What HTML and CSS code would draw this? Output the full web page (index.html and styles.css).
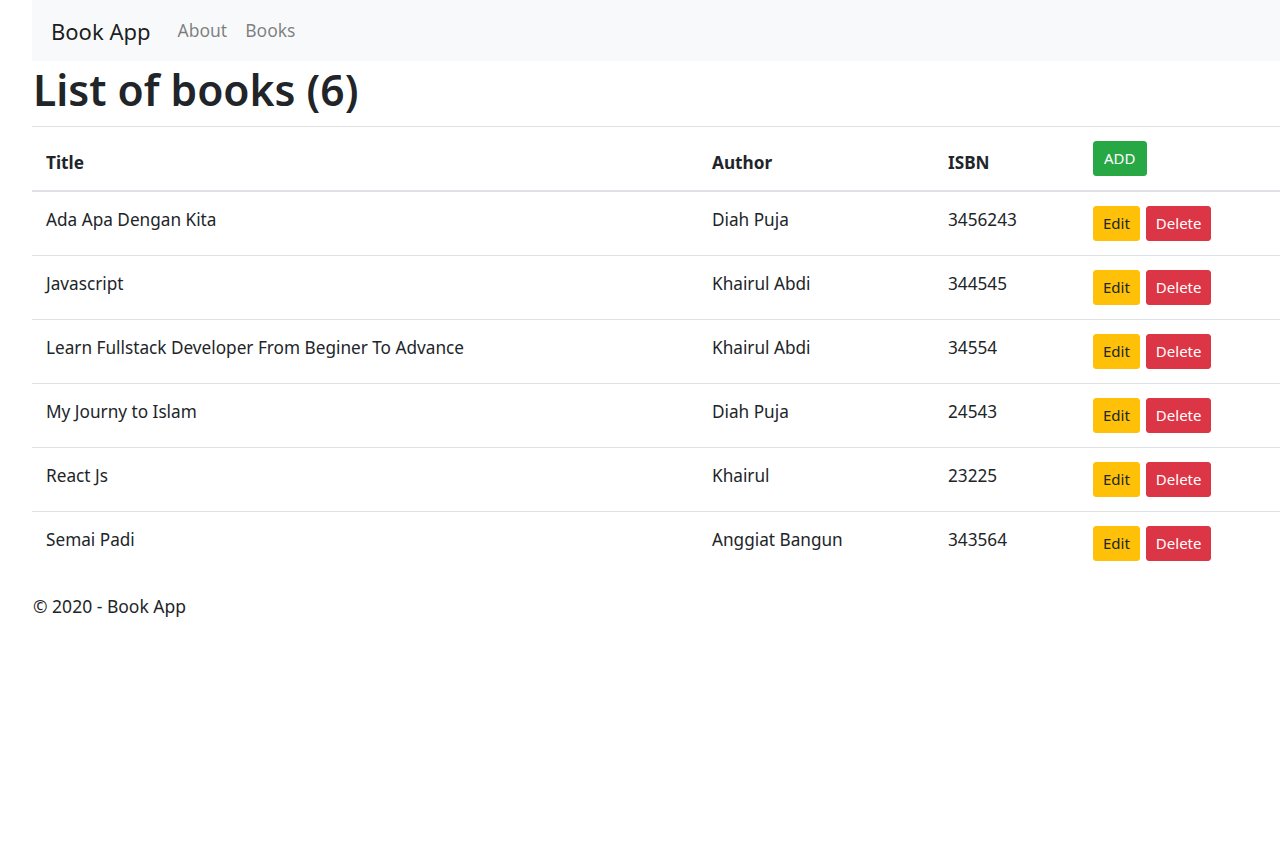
FILE: index.html
```html
<!DOCTYPE html>
<html lang="en">
<head>
<meta charset="utf-8">
<title>Book App</title>
<link rel="stylesheet" href="styles.css">
</head>
<body>
<div class="page">
  <nav class="navbar">
    <a class="brand" href="#">Book App</a>
    <a class="nav-link" href="#">About</a>
    <a class="nav-link" href="#">Books</a>
  </nav>
  <main>
    <h1 class="title">List of books (6)</h1>
    <table class="table">
      <colgroup>
        <col class="c-title"><col class="c-author"><col class="c-isbn"><col class="c-act">
      </colgroup>
      <thead>
        <tr><th>Title</th><th>Author</th><th>ISBN</th><th><button class="btn btn-add">ADD</button></th></tr>
      </thead>
      <tbody>
        <tr><td>Ada Apa Dengan Kita</td><td>Diah Puja</td><td>3456243</td><td class="act"><button class="btn btn-edit">Edit</button><button class="btn btn-del">Delete</button></td></tr>
        <tr><td>Javascript</td><td>Khairul Abdi</td><td>344545</td><td class="act"><button class="btn btn-edit">Edit</button><button class="btn btn-del">Delete</button></td></tr>
        <tr><td>Learn Fullstack Developer From Beginer To Advance</td><td>Khairul Abdi</td><td>34554</td><td class="act"><button class="btn btn-edit">Edit</button><button class="btn btn-del">Delete</button></td></tr>
        <tr><td>My Journy to Islam</td><td>Diah Puja</td><td>24543</td><td class="act"><button class="btn btn-edit">Edit</button><button class="btn btn-del">Delete</button></td></tr>
        <tr><td>React Js</td><td>Khairul</td><td>23225</td><td class="act"><button class="btn btn-edit">Edit</button><button class="btn btn-del">Delete</button></td></tr>
        <tr><td>Semai Padi</td><td>Anggiat Bangun</td><td>343564</td><td class="act"><button class="btn btn-edit">Edit</button><button class="btn btn-del">Delete</button></td></tr>
      </tbody>
    </table>
  </main>
  <footer class="footer">© 2020 - Book App</footer>
</div>
</body>
</html>
```

FILE: styles.css
```css
* { box-sizing: border-box; }
html, body {
  margin: 0;
  padding: 0;
  background: #fff;
}
body {
  font-family: "Noto Sans", "Open Sans", sans-serif;
  font-size: 17.2px;
  line-height: 27px;
  color: #212529;
  overflow: hidden;
}
.page {
  margin-left: 32px;
}
.navbar {
  display: flex;
  align-items: center;
  height: 61px;
  padding: 0 19px;
  background: #f8f9fa;
}
.brand {
  font-size: 22px;
  color: rgba(0,0,0,.9);
  text-decoration: none;
  margin-right: 18px;
  line-height: 34px;
}
.nav-link {
  font-size: 17.5px;
  color: rgba(0,0,0,.5);
  text-decoration: none;
  padding: 0 9px;
}
.title {
  font-size: 42.5px;
  font-weight: 600;
  line-height: 54px;
  margin: 2px 0 9px 1px;
  color: #212529;
}
.table {
  width: 1248px;
  border-collapse: collapse;
  table-layout: fixed;
  margin-bottom: 18px;
}
.c-title { width: 666px; }
.c-author { width: 236px; }
.c-isbn { width: 145px; }
.c-act { width: 201px; }
.table th, .table td {
  padding: 14px;
  text-align: left;
  border-top: 1px solid #dee2e6;
  vertical-align: top;
}
.table th {
  font-weight: 700;
  vertical-align: bottom;
  border-bottom: 2px solid #dee2e6;
}
.table tbody tr:first-child td { border-top: none; }
.btn {
  font-family: inherit;
  font-size: 15px;
  line-height: 23px;
  padding: 5px 9px;
  border: 1px solid transparent;
  border-radius: 3px;
  cursor: pointer;
  vertical-align: middle;
}
.btn-add {
  background: #28a745;
  border-color: #28a745;
  color: #fff;
  padding: 5px 10px;
}
.btn-edit {
  background: #ffc107;
  border-color: #ffc107;
  color: #212529;
  margin-right: 6px;
}
.btn-del {
  background: #dc3545;
  border-color: #dc3545;
  color: #fff;
}
.footer {
  font-size: 17.5px;
  line-height: 27px;
  padding-left: 1px;
}
```
